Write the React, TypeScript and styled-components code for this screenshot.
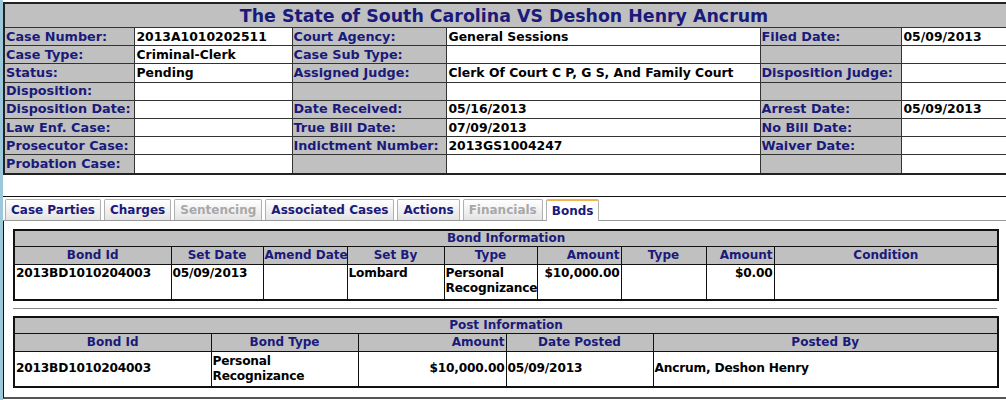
import styled, { createGlobalStyle } from "styled-components";

const GlobalStyle = createGlobalStyle`
  body {
    margin: 0;
    background: #ffffff;
    font-family: "DejaVu Sans", Verdana, sans-serif;
    font-size: 12.8px;
  }
`;

const Page = styled.div`
  width: 1003px;
  height: 400px;
  border-left: 3px solid #9cc8dc;
  overflow: hidden;
  background: #ffffff;
`;

const CaseTable = styled.table`
  margin-top: 2px;
  width: 1010px;
  border-collapse: collapse;
  border: 2px solid #222;
  table-layout: fixed;
`;

const TitleCell = styled.th`
  background: #c0c0c0;
  color: #1a1a7a;
  font-size: 17.4px;
  font-weight: bold;
  height: 23px;
  padding: 0 10px 0 0;
  text-align: center;
`;

const Label = styled.td`
  background: #c0c0c0;
  color: #1a1a7a;
  font-weight: bold;
  height: 17.2px;
  padding: 0 1px;
  border: 1px solid #333;
  white-space: nowrap;
  line-height: 16px;
`;

const Value = styled.td`
  background: #ffffff;
  color: #000;
  font-weight: bold;
  font-size: 12.4px;
  padding: 0 2px;
  border: 1px solid #333;
  white-space: nowrap;
  line-height: 16px;
`;

const TabArea = styled.div`
  margin-top: 21px;
  border-top: 1px solid #111;
`;

const TabStrip = styled.div`
  display: flex;
  gap: 3px;
  padding: 2px 0 0 2px;
  border-bottom: 1px solid #999;
  height: 21px;
`;

const Tab = styled.div<{ $active?: boolean; $disabled?: boolean }>`
  height: ${(p) => (p.$active ? "22px" : "21px")};
  margin-bottom: ${(p) => (p.$active ? "-1px" : "0")};
  padding: 0 5px;
  box-sizing: border-box;
  display: flex;
  align-items: center;
  font-size: 12px;
  font-weight: bold;
  border: 1px solid #b0b0b0;
  border-bottom: none;
  border-top: ${(p) => (p.$active ? "2px solid #f2b450" : "1px solid #b0b0b0")};
  border-radius: 2px 2px 0 0;
  color: ${(p) => (p.$disabled ? "#a8a8a8" : "#1a1a7a")};
  background: ${(p) =>
    p.$active ? "#ffffff" : "linear-gradient(#ffffff, #e4e4e4)"};
`;

const Panel = styled.div`
  border-left: 1px solid #111;
  border-bottom: 2px solid #555;
  padding: 8px 9px 9px 9px;
`;

const Section = styled.div<{ $rule?: boolean }>`
  width: 984px;
  padding-bottom: ${(p) => (p.$rule ? "7px" : "0")};
  border-bottom: ${(p) => (p.$rule ? "1px solid #888" : "none")};
  margin-bottom: ${(p) => (p.$rule ? "7px" : "0")};
`;

const Grid = styled.table`
  width: 984px;
  border-collapse: collapse;
  border: 2px solid #111;
  table-layout: fixed;
`;

const Caption = styled.th`
  background: #c0c0c0;
  color: #1a1a7a;
  font-size: 12px;
  font-weight: bold;
  text-align: center;
  height: 15px;
  line-height: 14px;
  padding: 0;
  border-bottom: 1px solid #111;
`;

const Head = styled.th<{ $right?: boolean }>`
  background: #c0c0c0;
  color: #1a1a7a;
  font-size: 12px;
  font-weight: bold;
  text-align: ${(p) => (p.$right ? "right" : "center")};
  height: 17px;
  line-height: 16px;
  padding: 0 1px;
  border: 1px solid #111;
  white-space: nowrap;
`;

const Cell = styled.td<{ $right?: boolean; $middle?: boolean }>`
  color: #000;
  font-size: 12.2px;
  letter-spacing: -0.2px;
  font-weight: bold;
  text-align: ${(p) => (p.$right ? "right" : "left")};
  vertical-align: ${(p) => (p.$middle ? "middle" : "top")};
  height: 32px;
  line-height: 15px;
  padding: 1px 1px;
  border: 1px solid #111;
`;

const caseRows: [string, string, string, string, string, string][] = [
  ["Case Number:", "2013A1010202511", "Court Agency:", "General Sessions", "Filed Date:", "05/09/2013"],
  ["Case Type:", "Criminal-Clerk", "Case Sub Type:", "", "", ""],
  ["Status:", "Pending", "Assigned Judge:", "Clerk Of Court C P, G S, And Family Court", "Disposition Judge:", ""],
  ["Disposition:", "", "", "", "", ""],
  ["Disposition Date:", "", "Date Received:", "05/16/2013", "Arrest Date:", "05/09/2013"],
  ["Law Enf. Case:", "", "True Bill Date:", "07/09/2013", "No Bill Date:", ""],
  ["Prosecutor Case:", "", "Indictment Number:", "2013GS1004247", "Waiver Date:", ""],
  ["Probation Case:", "", "", "", "", ""],
];

const tabs = [
  { name: "Case Parties" },
  { name: "Charges" },
  { name: "Sentencing", disabled: true },
  { name: "Associated Cases" },
  { name: "Actions" },
  { name: "Financials", disabled: true },
  { name: "Bonds", active: true },
];

const bondCols = [
  { name: "Bond Id", w: 157 },
  { name: "Set Date", w: 92 },
  { name: "Amend Date", w: 84 },
  { name: "Set By", w: 97 },
  { name: "Type", w: 93 },
  { name: "Amount", w: 84, right: true },
  { name: "Type", w: 85 },
  { name: "Amount", w: 68, right: true },
  { name: "Condition", w: 224 },
];

const postCols = [
  { name: "Bond Id", w: 197 },
  { name: "Bond Type", w: 147 },
  { name: "Amount", w: 148, right: true },
  { name: "Date Posted", w: 147 },
  { name: "Posted By", w: 345 },
];

export default function App() {
  return (
    <Page>
      <GlobalStyle />
      <CaseTable>
        <colgroup>
          <col style={{ width: 130 }} />
          <col style={{ width: 158 }} />
          <col style={{ width: 154 }} />
          <col style={{ width: 314 }} />
          <col style={{ width: 141 }} />
          <col style={{ width: 113 }} />
        </colgroup>
        <thead>
          <tr>
            <TitleCell colSpan={6}>The State of South Carolina VS Deshon Henry Ancrum</TitleCell>
          </tr>
        </thead>
        <tbody>
          {caseRows.map((r, i) => (
            <tr key={i}>
              <Label>{r[0]}</Label>
              <Value>{r[1]}</Value>
              <Label>{r[2]}</Label>
              <Value>{r[3]}</Value>
              <Label>{r[4]}</Label>
              <Value>{r[5]}</Value>
            </tr>
          ))}
        </tbody>
      </CaseTable>

      <TabArea>
        <TabStrip>
          {tabs.map((t) => (
            <Tab key={t.name} $active={t.active} $disabled={t.disabled}>
              {t.name}
            </Tab>
          ))}
        </TabStrip>
        <Panel>
          <Section $rule>
            <Grid>
              <colgroup>
                {bondCols.map((c, i) => (
                  <col key={i} style={{ width: c.w }} />
                ))}
              </colgroup>
              <thead>
                <tr>
                  <Caption colSpan={9}>Bond Information</Caption>
                </tr>
                <tr>
                  {bondCols.map((c, i) => (
                    <Head key={i} $right={c.right}>
                      {c.name}
                    </Head>
                  ))}
                </tr>
              </thead>
              <tbody>
                <tr>
                  <Cell>2013BD1010204003</Cell>
                  <Cell>05/09/2013</Cell>
                  <Cell></Cell>
                  <Cell>Lombard</Cell>
                  <Cell>Personal Recognizance</Cell>
                  <Cell $right>$10,000.00</Cell>
                  <Cell></Cell>
                  <Cell $right>$0.00</Cell>
                  <Cell></Cell>
                </tr>
              </tbody>
            </Grid>
          </Section>
          <Section>
            <Grid>
              <colgroup>
                {postCols.map((c, i) => (
                  <col key={i} style={{ width: c.w }} />
                ))}
              </colgroup>
              <thead>
                <tr>
                  <Caption colSpan={5}>Post Information</Caption>
                </tr>
                <tr>
                  {postCols.map((c, i) => (
                    <Head key={i} $right={c.right}>
                      {c.name}
                    </Head>
                  ))}
                </tr>
              </thead>
              <tbody>
                <tr>
                  <Cell $middle>2013BD1010204003</Cell>
                  <Cell $middle>Personal Recognizance</Cell>
                  <Cell $middle $right>$10,000.00</Cell>
                  <Cell $middle>05/09/2013</Cell>
                  <Cell $middle>Ancrum, Deshon Henry</Cell>
                </tr>
              </tbody>
            </Grid>
          </Section>
        </Panel>
      </TabArea>
    </Page>
  );
}
